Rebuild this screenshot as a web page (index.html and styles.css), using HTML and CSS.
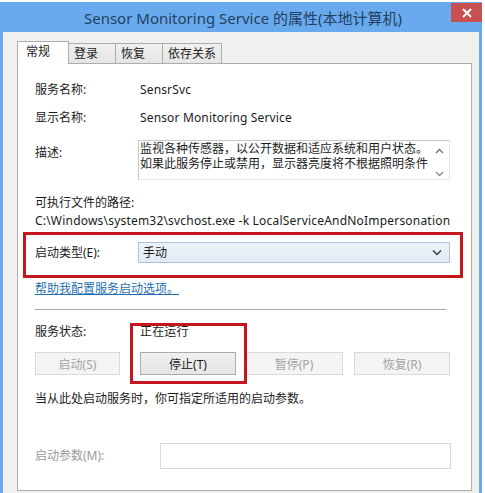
FILE: index.html
```html
<!DOCTYPE html>
<html lang="zh-CN">
<head>
    <meta charset="UTF-8">
    <title>Sensor Monitoring Service 的属性(本地计算机)</title>
    <link rel="stylesheet" href="styles.css">
</head>
<body>
    <div class="window">
        <div class="titlebar">
            <span class="title">Sensor Monitoring Service 的属性(本地计算机)</span>
            <span class="close">
                <svg width="10" height="10" viewBox="0 0 10 10"><path d="M1 1 L9 9 M9 1 L1 9" stroke="#fff" stroke-width="2"/></svg>
            </span>
        </div>

        <div class="client">
            <div class="tabs">
                <div class="tab active">常规</div>
                <div class="tab t-login">登录</div>
                <div class="tab t-restore">恢复</div>
                <div class="tab t-deps">依存关系</div>
            </div>

            <div class="panel">
                <div class="row">
                    <span class="label">服务名称:</span>
                    <span class="value">SensrSvc</span>
                </div>
                <div class="row gap-display">
                    <span class="label">显示名称:</span>
                    <span class="value">Sensor Monitoring Service</span>
                </div>
                <div class="row row-top gap-desc">
                    <span class="label desc-label">描述:</span>
                    <div class="textbox">
                        <p>监视各种传感器，以公开数据和适应系统和用户状态。如果此服务停止或禁用，显示器亮度将不根据照明条件</p>
                        <div class="scroll">
                            <svg width="9" height="6" viewBox="0 0 9 6"><path d="M1 5 L4.5 1.5 L8 5" fill="none" stroke="#6d6d6d" stroke-width="1.3"/></svg>
                            <svg width="9" height="6" viewBox="0 0 9 6"><path d="M1 1 L4.5 4.5 L8 1" fill="none" stroke="#8a8a8a" stroke-width="1.3"/></svg>
                        </div>
                    </div>
                </div>

                <div class="path-label">可执行文件的路径:</div>
                <div class="path">C:\Windows\system32\svchost.exe -k LocalServiceAndNoImpersonation</div>

                <div class="row gap-startup">
                    <span class="label">启动类型(E):</span>
                    <div class="combo">
                        <span>手动</span>
                        <svg width="10" height="7" viewBox="0 0 10 7"><path d="M1 1.5 L5 5.5 L9 1.5" fill="none" stroke="#3c3c3c" stroke-width="1.5"/></svg>
                    </div>
                </div>

                <a class="help" href="#">帮助我配置服务启动选项。</a>

                <div class="separator"></div>

                <div class="row">
                    <span class="label">服务状态:</span>
                    <span class="value">正在运行</span>
                </div>

                <div class="buttons">
                    <button class="btn b-start" disabled>启动(S)</button>
                    <button class="btn b-stop">停止(T)</button>
                    <button class="btn b-pause" disabled>暂停(P)</button>
                    <button class="btn b-resume" disabled>恢复(R)</button>
                </div>

                <div class="hint">当从此处启动服务时，你可指定所适用的启动参数。</div>

                <div class="row params">
                    <span class="label muted">启动参数(M):</span>
                    <div class="param-input"></div>
                </div>

                <!-- annotation boxes drawn over the dialog -->
                <div class="mark mark-startup"></div>
                <div class="mark mark-stop"></div>
            </div>
        </div>
    </div>
</body>
</html>
```

FILE: styles.css
```css
/* Global */
body {
    margin: 0;
    background: #ffffff;
    font-family: "Segoe UI", "Noto Sans", "Noto Sans CJK SC", sans-serif;
    font-size: 12px;
    color: #1b1b1b;
}

/* Window frame */
.window {
    width: 482px;
    height: 491px;
    margin-top: 2px;
    padding: 0 3px;
    box-sizing: border-box;
    background: #69aaee;
    display: flex;
    flex-direction: column;
}

.titlebar {
    height: 30px;
    position: relative;
    display: flex;
    align-items: center;
    justify-content: center;
}

.title {
    font-size: 15px;
    color: #23405f;
    padding-left: 4px;
}

.close {
    position: absolute;
    top: 1px;
    right: -3px;
    width: 31px;
    height: 19px;
    background: #c75050;
    display: flex;
    align-items: center;
    justify-content: center;
}

/* Client area */
.client {
    flex: 1;
    background: #f0f0f0;
    padding: 9px 7px 0 14px;
}

.tabs {
    display: flex;
    align-items: flex-end;
    height: 22px;
}

.tab {
    height: 20px;
    line-height: 19px;
    box-sizing: border-box;
    padding-left: 5px;
    border: 1px solid #acacac;
    border-bottom: none;
    border-left: none;
    background: linear-gradient(#f0f0f0, #e5e5e5);
}

.tab.active {
    height: 23px;
    width: 52px;
    padding-left: 8px;
    line-height: 20px;
    background: #ffffff;
    border-left: 1px solid #acacac;
    position: relative;
    z-index: 1;
    margin-bottom: -1px;
}

.t-login { width: 47px; }
.t-restore { width: 47px; }
.t-deps { width: 59px; }

/* Property page */
.panel {
    position: relative;
    height: 428px;
    box-sizing: border-box;
    background: #ffffff;
    border: 1px solid #adadad;
    padding: 17px 0 0 17px;
}

.row {
    display: flex;
    align-items: center;
    line-height: 18px;
}

.row-top {
    align-items: flex-start;
}

.label {
    width: 103px;
    flex-shrink: 0;
}

.value {
    padding-left: 2px;
    letter-spacing: 0.15px;
}

.muted {
    color: #9a9a9a;
}

.gap-display { margin-top: 10px; }
.gap-desc { margin-top: 13px; }
.gap-startup { margin-top: 12px; }

.desc-label {
    margin-top: 4px;
}

.textbox {
    width: 312px;
    height: 40px;
    box-sizing: border-box;
    border: 1px solid #c8c8c8;
    border-right-color: #e6e6e6;
    border-bottom-color: #e6e6e6;
    display: flex;
}

.textbox p {
    margin: 0;
    padding: 0 0 0 1px;
    width: 290px;
    line-height: 15px;
}

.scroll {
    flex: 1;
    display: flex;
    flex-direction: column;
    justify-content: space-between;
    align-items: center;
    padding: 7px 0 2px;
}

.path-label {
    margin-top: 14px;
    line-height: 18px;
}

.path {
    line-height: 18px;
    white-space: nowrap;
    letter-spacing: 0.2px;
}

.combo {
    width: 312px;
    height: 21px;
    box-sizing: border-box;
    border: 1px solid #a9c3df;
    background: linear-gradient(#edf3f9, #e2ebf5);
    display: flex;
    align-items: center;
    justify-content: space-between;
    padding: 0 7px 0 4px;
}

.help {
    display: inline-block;
    margin-top: 17px;
    line-height: 18px;
    color: #1f6fb2;
    text-decoration: underline;
}

.separator {
    width: 411px;
    border-top: 1px solid #a8a8a8;
    margin: 11px 0 13px;
}

/* Service control buttons */
.buttons {
    display: flex;
    margin-top: 11px;
}

.btn {
    height: 23px;
    padding: 0;
    font-family: inherit;
    font-size: 12px;
    border: 1px solid #acacac;
    background: linear-gradient(#f0f0f0, #e5e5e5);
    color: #1b1b1b;
}

.btn:disabled {
    border-color: #d9d9d9;
    background: #f4f4f4;
    color: #a3a3a3;
}

.b-start { width: 85px; }
.b-stop { width: 96px; margin-left: 20px; }
.b-pause { width: 98px; margin-left: 9px; }
.b-resume { width: 96px; margin-left: 11px; }

.hint {
    margin-top: 15px;
    line-height: 18px;
}

.params {
    margin-top: 35px;
}

.params .label {
    width: 125px;
}

.param-input {
    width: 291px;
    height: 26px;
    box-sizing: border-box;
    border: 1px solid #d9d9d9;
}

/* Red annotation boxes */
.mark {
    position: absolute;
    border: 3px solid #c4161c;
    box-sizing: border-box;
}

.mark-startup {
    left: 5px;
    top: 168px;
    width: 440px;
    height: 46px;
}

.mark-stop {
    left: 112px;
    top: 259px;
    width: 117px;
    height: 61px;
}
```
